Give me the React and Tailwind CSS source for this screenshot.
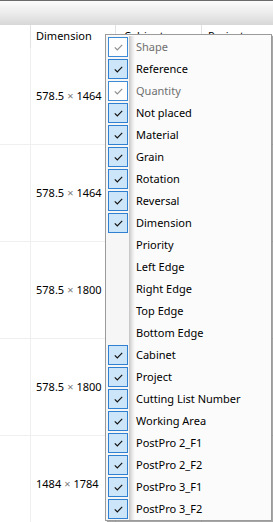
import React from "react";

const items = [
  ["Shape", true, true],
  ["Reference", true, false],
  ["Quantity", true, true],
  ["Not placed", true, false],
  ["Material", true, false],
  ["Grain", true, false],
  ["Rotation", true, false],
  ["Reversal", true, false],
  ["Dimension", true, false],
  ["Priority", false, false],
  ["Left Edge", false, false],
  ["Right Edge", false, false],
  ["Top Edge", false, false],
  ["Bottom Edge", false, false],
  ["Cabinet", true, false],
  ["Project", true, false],
  ["Cutting List Number", true, false],
  ["Working Area", true, false],
  ["PostPro 2_F1", true, false],
  ["PostPro 2_F2", true, false],
  ["PostPro 3_F1", true, false],
  ["PostPro 3_F2", true, false],
];

const rows = [
  ["578.5", "1464"],
  ["578.5", "1464"],
  ["578.5", "1800"],
  ["578.5", "1800"],
  ["1484", "1784"],
];

function Check({ disabled }) {
  return (
    <svg width="9" height="7" viewBox="0 0 9 7">
      <polyline
        points="0.8,3.3 3.3,5.8 8.2,0.9"
        fill="none"
        stroke={disabled ? "#8d8d8d" : "#111111"}
        strokeWidth="1.2"
      />
    </svg>
  );
}

export default function App() {
  return (
    <div className="relative w-[273px] h-[522px] overflow-hidden bg-white font-['Noto_Sans',sans-serif] text-[11px] text-black">
      <div className="h-px bg-[#6b6b6b]" />
      <div className="h-[24px] bg-gradient-to-b from-[#fcfcfc] via-[#ececec] to-[#d7d7d7]" />
      <div className="flex h-[23px] items-center">
        <div className="w-[31px] h-full border-r border-[#e3e3e3]" />
        <div className="w-[85px] h-full border-r border-[#e3e3e3] pl-[5px] flex items-center">Dimension</div>
        <div className="w-[86px] h-full border-r border-[#e3e3e3] pl-[8px] flex items-center">Cabinet</div>
        <div className="flex-1 h-full pl-[6px] flex items-center">Project</div>
      </div>
      {rows.map((r, i) => (
        <div key={i} className="flex h-[97px] border-b border-[#efefef]">
          <div className="w-[31px] h-full border-r border-[#efefef]" />
          <div className="w-[85px] h-full border-r border-[#efefef] pl-[5px] flex items-center whitespace-nowrap">
            <span>{r[0]}</span>
            <span className="text-[#7c7c7c] mx-[3px]">×</span>
            <span>{r[1]}</span>
          </div>
          <div className="w-[86px] h-full border-r border-[#efefef]" />
          <div className="flex-1" />
        </div>
      ))}

      <div className="absolute left-[105px] top-[34px] w-[167px] border border-[#9b9b9b] bg-[#fbfbfb] pt-px shadow-[2px_2px_1px_rgba(0,0,0,0.35)] flex">
        <div className="w-[23px] bg-[#f6f6f6] flex flex-col">
          {items.map(([label, checked, disabled]) => (
            <div key={label} className="h-[22px] flex items-center pl-[2px]">
              {checked && (
                <div
                  className={
                    "w-[20px] h-[20px] border flex items-center justify-center " +
                    (disabled ? "border-[#3d8ad6] bg-[#fdfdfd]" : "border-[#2f80d1] bg-[#cde5f8]")
                  }
                >
                  <Check disabled={disabled} />
                </div>
              )}
            </div>
          ))}
        </div>
        <div className="w-[6px] bg-gradient-to-r from-[#c4c4c4] via-[#e6e6e6] to-[#fbfbfb]" />
        <div className="flex-1 flex flex-col pl-px">
          {items.map(([label, checked, disabled]) => (
            <div
              key={label}
              className={"h-[22px] flex items-center whitespace-nowrap " + (disabled ? "text-[#6f6f6f]" : "text-black")}
            >
              {label}
            </div>
          ))}
        </div>
      </div>
    </div>
  );
}
